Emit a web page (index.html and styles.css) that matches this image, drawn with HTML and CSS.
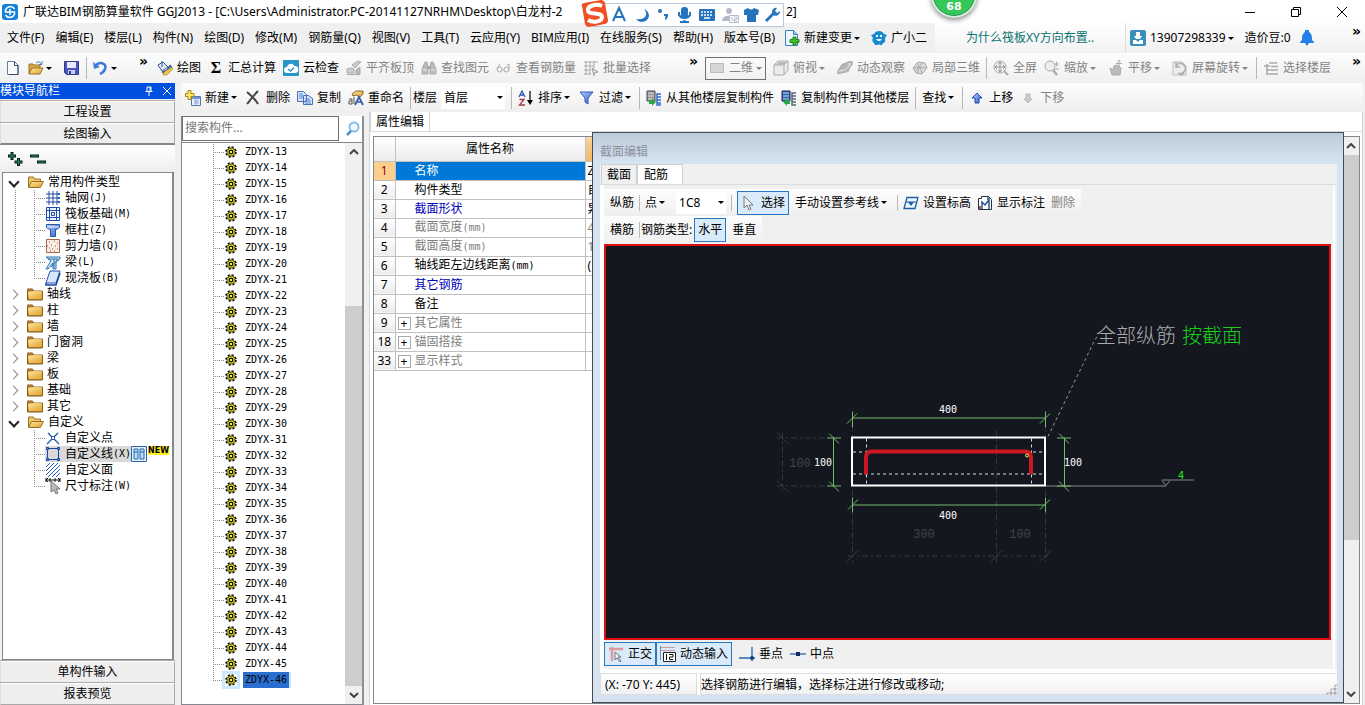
FILE: index.html
```html
<!DOCTYPE html>
<html lang="zh-CN">
<head>
<meta charset="utf-8">
<title>广联达BIM钢筋算量软件 GGJ2013</title>
<link rel="stylesheet" href="styles.css">
</head>
<body>
<svg class="defs" aria-hidden="true">
  <defs>
    <linearGradient id="gold" x1="0" y1="0" x2="1" y2="1"><stop offset="0" stop-color="#ffe9a0"/><stop offset="1" stop-color="#dfa02c"/></linearGradient>
    <linearGradient id="blue" x1="0" y1="0" x2="1" y2="1"><stop offset="0" stop-color="#b9d2ff"/><stop offset="1" stop-color="#2a57c8"/></linearGradient>
    <symbol id="logo" viewBox="0 0 16 16"><rect width="16" height="16" rx="3" fill="#1580d8"/><path d="M12.500 5A5 5 0 0 0 3.500 6v2h9v2a5 5 0 0 1-9 1M8 5v6" fill="none" stroke="#fff" stroke-width="1.5"/></symbol>
    <symbol id="new" viewBox="0 0 16 16"><path d="M2.500 1.500h7l3.500 3.500v9.500H2.500z" fill="#fafcff" stroke="#6c7f9f"/><path d="M9.500 1.500v4H13v9H4" fill="none" stroke="#35486a"/></symbol>
    <symbol id="open" viewBox="0 0 16 16"><path d="M1 14V4h4l1 1h6v3" fill="#d9a53c" stroke="#9a7528"/><path d="M1 14l3-6h11l-3 6z" fill="url(#gold)" stroke="#9a7528"/><path d="M8 3c3-2 4-1 5 1M14 1v3.500h-3" fill="none" stroke="#4b7aa8"/></symbol>
    <symbol id="save" viewBox="0 0 16 16"><path d="M.5 1.500h14v13h-12l-2-2z" fill="#4a55c4" stroke="#303a8c"/><path d="M3 2h9v6H3z" fill="#e8ebff"/><path d="M4 10h7v4H4z" fill="#c9cef0"/><path d="M5 11h2v3H5z" fill="#303a8c"/></symbol>
    <symbol id="undo" viewBox="0 0 16 16"><path d="M3 5c5-4 11-1 9 4-1 3-3 4-5 5" fill="none" stroke="#3e7bd6" stroke-width="2.500"/><path d="M0 2l1 7 6-2z" fill="#3e7bd6"/></symbol>
    <symbol id="paint" viewBox="0 0 16 16"><path d="M1 5l5-3 5 5-6 4z" fill="#dfe9f7" stroke="#345a8c"/><path d="M5 1v6" stroke="#345a8c"/><path d="M13 5c2 1 2 4 0 6l-5 3-3-2 5-2z" fill="#5b84c8" stroke="#27457c"/><path d="M7 12l-1 3h4l6-6-1-2z" fill="#e8c44f" stroke="#8b7122" stroke-width=".5"/></symbol>
    <symbol id="cloud" viewBox="0 0 16 16"><rect width="16" height="16" rx="1" fill="#2795c8"/><path d="M4 13a3 3 0 0 1 0-6 4 4 0 0 1 7.500-1A3.500 3.500 0 0 1 12 13z" fill="#fff"/><path d="M5 9l2.500 2L11 7.500" fill="none" stroke="#2795c8" stroke-width="1.500"/></symbol>
    <symbol id="align" viewBox="0 0 16 16"><path d="M1 9l4-1 3 1v4H1zM6 5l6-4 3 1-6 6z" fill="#ccc" stroke="#aaa"/><path d="M1 14.500h13V7l-4 3v4" fill="#bbb" stroke="#aaa"/></symbol>
    <symbol id="bino" viewBox="0 0 16 16"><path d="M4 2h2l1 5v7H1V9zM10 2h2l3 7v5H9V7z" fill="#bbb" stroke="#aaa"/><path d="M6 6h4v3H6z" fill="#a8a8a8"/><path d="M2 10h4M10 10h4" stroke="#eee"/></symbol>
    <symbol id="glass" viewBox="0 0 16 16"><path d="M1 9.500a2.500 2.500 0 1 0 5 0 2.500 2.500 0 1 0-5 0M8 9.500a2.500 2.500 0 1 0 5 0 2.500 2.500 0 1 0-5 0M1 9l3-5M6 10h2M13 10V4l-2 1" fill="none" stroke="#aaa"/></symbol>
    <symbol id="batch" viewBox="0 0 16 16"><path d="M1 2h14M1 6h10M1 10h7M1 14h7M3 1v14M7 1v14M11 1v7" fill="none" stroke="#aaa"/><path d="M9 8l6 4-3 .5-1 3z" fill="#e5e5e5" stroke="#999"/></symbol>
    <symbol id="rect" viewBox="0 0 16 16"><path d="M1.500 3.500h13v9h-13z" fill="#d5d5d5" stroke="#bbb"/></symbol>
    <symbol id="cube" viewBox="0 0 16 16"><path d="M1 5l4-4h10v9l-4 5H1z" fill="#ececec" stroke="#aaa"/><path d="M1 5h10v10M11 5l4-4" fill="none" stroke="#aaa"/><path d="M2 5l4-3h8l-3 3z" fill="#bbb"/></symbol>
    <symbol id="orbit" viewBox="0 0 16 16"><circle cx="8" cy="8" r="5" fill="#bbb"/><path d="M1 13C0 9 11 0 15 2c1 4-10 13-14 11z" fill="#bbb" fill-opacity=".6" stroke="#aaa" stroke-width="1.500"/><path d="M4 10c3 2 8-2 9-6" fill="none" stroke="#eee"/></symbol>
    <symbol id="local" viewBox="0 0 16 16"><path d="M1 8l5-6 7 1 2 5-5 6-6-1z" fill="#ddd" stroke="#aaa"/><path d="M5 3l2 4 7 1M2 8l5-1-1 6M8 7l2 6M10 3L3 12" fill="none" stroke="#aaa"/></symbol>
    <symbol id="full" viewBox="0 0 16 16"><circle cx="7" cy="7" r="6" fill="#eee" stroke="#aaa"/><path d="M7 2v10M2 7h10M5 4l2-2 2 2M5 10l2 2 2-2M4 5L2 7l2 2M10 5l2 2-2 2" fill="none" stroke="#999"/><path d="M11 11l4 4" stroke="#aaa" stroke-width="2"/></symbol>
    <symbol id="zoom" viewBox="0 0 16 16"><circle cx="6" cy="6" r="5" fill="#eee" stroke="#aaa"/><path d="M9 10l4 5" stroke="#aaa" stroke-width="2.500"/><path d="M10 4h5M12.500 1.500v5M10 9h5" stroke="#aaa"/></symbol>
    <symbol id="pan" viewBox="0 0 16 16"><path d="M2 8l3 2 1-4 3-1 4 3-1 7H4z" fill="#bbb" stroke="#aaa"/><path d="M11 0v7M8 3.500h6M9.500 1.500L11 0l1.500 1.500" fill="none" stroke="#aaa"/></symbol>
    <symbol id="rot" viewBox="0 0 16 16"><path d="M1 2h9l4 4v9H1z" fill="#eee" stroke="#bbb"/><path d="M4 6a5 5 0 1 1 2 7M4 2v5h4M12 13l-4 2" fill="none" stroke="#aaa" stroke-width="1.500"/></symbol>
    <symbol id="floor" viewBox="0 0 16 16"><path d="M1 6h6M3 10h12M3 14h12M6 3h8M8 6.500h7" fill="none" stroke="#aaa" stroke-width="1.700"/><path d="M4 4v10" stroke="#aaa" stroke-width="1.500"/></symbol>
    <symbol id="add" viewBox="0 0 16 16"><path d="M6.500 6.500h9v9h-9z" fill="#e9f2ff" stroke="#5577a8"/><path d="M7 7h8v2H7z" fill="#6b9ae0"/><path d="M9 11h5M9 13h5M11 9v6" stroke="#8ba7cf"/><path d="M3 .5h3v3h3v3H6v3H3v-3H.5v-3H3z" fill="#ffe766" stroke="#aa841d"/></symbol>
    <symbol id="x" viewBox="0 0 16 16"><path d="M1 2c5 4 8 7 11 12M12 1C8 5 5 9 1 14" fill="none" stroke="#444" stroke-width="2"/></symbol>
    <symbol id="copy" viewBox="0 0 16 16"><path d="M.5 1.500h6l3 3v7h-9zM6.500 5.500h5l4 3v6h-9z" fill="#d8e7ff" stroke="#4b6fb0"/><path d="M2 4h4M2 6h4M2 8h4M8 9h5M8 11h6M8 13h6" stroke="#4f84d8"/></symbol>
    <symbol id="rename" viewBox="0 0 16 16"><path d="M4 4l4-3h7v3l-3 3-4-2-3 1z" fill="url(#gold)" stroke="#82662b"/><path d="M7 15l4-8 4 8M9 12h5" fill="none" stroke="#315cad" stroke-width="1.700"/><path d="M1 9h3v5H1v-3h3M6 7v7" fill="none" stroke="#555"/></symbol>
    <symbol id="sort" viewBox="0 0 16 16"><path d="M1 7l3-6 3 6M2 5h4" fill="none" stroke="#2f55b0" stroke-width="1.300"/><path d="M1.500 9.500H6L1.500 15H7" fill="none" stroke="#a93a3a" stroke-width="1.300"/><path d="M12 1v12" stroke="#111" stroke-width="1.300"/><path d="M9 10l3 5 3-5z"/></symbol>
    <symbol id="filter" viewBox="0 0 16 16"><path d="M1 2h13L9 8v6l-3-2V8z" fill="url(#blue)" stroke="#3157ad"/></symbol>
    <symbol id="from" viewBox="0 0 16 16"><path d="M1 1h8v10H1z" fill="#999" stroke="#445"/><path d="M2 3h6M2 6h6M2 9h6" stroke="#ddd"/><path d="M15 4h-4v11h4M11 7h4M11 10h4M11 13h4" fill="none" stroke="#2e6fca" stroke-width="1.500"/><path d="M3 10h3V8l4 4-4 4v-2H3z" fill="#30a342"/></symbol>
    <symbol id="to" viewBox="0 0 16 16"><path d="M1 1h8v10H1z" fill="#2e65b8" stroke="#224"/><path d="M2 3h6M2 6h6M2 9h6" stroke="#cde"/><path d="M15 3h-4v12h4M11 6h4M11 9h4M11 12h4" fill="none" stroke="#567" stroke-width="1.500"/><path d="M9 10H6V8l-4 4 4 4v-2h3z" fill="#28a34a"/></symbol>
    <symbol id="up" viewBox="0 0 12 16"><path d="M6 3l5 5H8v5H4V8H1z" fill="url(#blue)" stroke="#2149b0"/></symbol>
    <symbol id="down" viewBox="0 0 12 16"><path d="M6 13L2 9h2V4h4v5h2z" fill="#ccc" stroke="#bbb"/></symbol>
    <symbol id="change" viewBox="0 0 16 16"><path d="M1.500.5h8l4 4v11h-12z" fill="#eef7ff" stroke="#3d7fb8"/><path d="M9.500.5v4h4" fill="#9cc9ec" stroke="#3d7fb8"/><path d="M9 7h3v2.500h3v3h-3V15H9v-2.500H6v-3h3z" fill="#3fbd2a" stroke="#24851a"/></symbol>
    <symbol id="robot" viewBox="0 0 16 16"><path d="M3 4c2-4 8-4 10 0l3 1-2 3c1 4-1 5-2 5l-1 2H9l-1-1-1 1H4l-1-2C1 12 1 9 2 8L0 5z" fill="#1788d2"/><path d="M5 6h2M9 6h2" stroke="#fff" stroke-width="2"/><path d="M5 9c2 3 4 3 6 0z" fill="#e6f8ff"/></symbol>
    <symbol id="user" viewBox="0 0 16 16"><rect width="16" height="16" rx="2" fill="#3b8fbd"/><path d="M6 2h4v4h2l-2 3H6L4 6h2zM3 10h10v4H3z" fill="#fff"/><path d="M6 10l2 2 2-2" fill="#3b8fbd"/></symbol>
    <symbol id="bell" viewBox="0 0 16 16"><path d="M6 2V0h4v2c3 2 3 5 3 8l2 2v1H1v-1l2-2c0-3 0-6 3-8zM6 13h4l-2 3z" fill="#257fe8"/></symbol>
    <symbol id="folder" viewBox="0 0 16 16"><path d="M.5 3h5l1 2h9v9H.5z" fill="#bc8427" stroke="#80611f"/><path d="M1 6l6-1h8v8H2z" fill="url(#gold)"/></symbol>
    <symbol id="fopen" viewBox="0 0 16 16"><path d="M.5 13V3h5l1 2h6v3" fill="#efc767" stroke="#96732b"/><path d="M.5 13.500l3-6h12l-3 6z" fill="url(#gold)" stroke="#96732b"/></symbol>
    <symbol id="grid" viewBox="0 0 16 16"><path d="M1 4h14M1 8h14M1 12h14M4 1v14M8 1v14M12 1v14" stroke="#244b9c"/><path d="M13 3h2v2h-2zM13 7h2v2h-2zM13 11h2v2h-2z" fill="#245fc9"/></symbol>
    <symbol id="raft" viewBox="0 0 16 16"><path d="M1.500 1.500h13v13h-13zM4.500 4.500h7v7h-7zM1 4.500h14M1 11.500h14M4.500 1v14M11.500 1v14M6.500 6.500h3v3h-3z" fill="#dfeaff" fill-opacity=".4" stroke="#1d4ea8"/></symbol>
    <symbol id="col" viewBox="0 0 16 16"><path d="M1.500 2.500h13v3l-3 2h-1v7h-5v-7h-1l-3-2z" fill="url(#blue)" stroke="#2454a8"/><path d="M2 5h12" stroke="#eef"/></symbol>
    <symbol id="wall" viewBox="0 0 16 16"><path d="M1.500 1.500h13v13h-13z" fill="#fbefe5" stroke="#a86643"/><path d="M4 4h1M9 3h1M12 5h1M6 7h1M10 8h1M4 10h1M7 11h1M12 11h1M9 13h1M5 13h1M2 8h1" stroke="#865032"/></symbol>
    <symbol id="beam" viewBox="0 0 16 16"><path d="M1 3h14v2l-4 3v7H8V9l-5 6H1l5-8z" fill="#d6e9fb" stroke="#286fae"/><path d="M3 5h10L6 13M9 14V5" stroke="#286fae" fill="none"/></symbol>
    <symbol id="slab" viewBox="0 0 16 16"><path d="M5 1h10l-4 12H1z" fill="#d6e7fd" stroke="#2457a8"/><path d="M1 13v2h10l4-12" fill="none" stroke="#1747a0" stroke-width="1.500"/></symbol>
    <symbol id="point" viewBox="0 0 16 16"><path d="M3 3l4 4M9 9l5 5M13 3L9 7M7 9l-5 5" stroke="#2457a8" stroke-width="1.300"/><path d="M6.500 6.500h3v3h-3z" fill="#fff" stroke="#2457a8"/></symbol>
    <symbol id="line" viewBox="0 0 16 16"><path d="M2.500 2.500h11v11h-11z" fill="none" stroke="#1747a0"/><path d="M1.500 1.500h2v2h-2zM12.500 1.500h2v2h-2zM1.500 12.500h2v2h-2zM12.500 12.500h2v2h-2z" fill="#5d95e8" stroke="#1747a0"/></symbol>
    <symbol id="face" viewBox="0 0 16 16"><path d="M1 5l4-4M1 9l8-8M1 13L13 1M3 15L15 3M7 15l8-8M11 15l4-4" stroke="#2457b8"/></symbol>
    <symbol id="dim" viewBox="0 0 16 16"><path d="M1 0v4M15 0v4M1 2h14M3 0L1 2l2 2M13 0l2 2-2 2M5 0v4M10 0v4" fill="none" stroke="#111"/><path d="M6 3v11l3-2 2 4 2-1-2-4h4z" fill="#bbb" stroke="#777"/></symbol>
    <symbol id="book" viewBox="0 0 16 16"><path d="M.5.5h15v15H.500z" fill="#e2f1ff" stroke="#2c66a5"/><path d="M3 3h4v10H3zM9 3h4v10H9zM3 6h4M9 6h4" fill="#b8dcff" stroke="#2c66a5"/></symbol>
    <symbol id="gear" viewBox="0 0 12 12"><circle cx="6" cy="6" r="4.600" fill="none" stroke="#171700" stroke-width="2.400" stroke-dasharray="2 1.610"/><circle cx="6" cy="6" r="4.100" fill="#dede28" stroke="#333300" stroke-width=".7"/><path d="M6 2v8M2 6h8M3 3l6 6M9 3l-6 6" stroke="#333300" stroke-width=".6"/><rect x="4.500" y="4.500" width="3" height="3" fill="#f4f440" stroke="#111"/></symbol>
    <symbol id="mag" viewBox="0 0 16 16"><circle cx="9" cy="6" r="4.500" fill="#eef8ff" stroke="#8abce4" stroke-width="2"/><path d="M6 10l-4 4" stroke="#4f8fc8" stroke-width="2.500"/></symbol>
    <symbol id="plus2" viewBox="0 0 16 16"><path d="M5 1v8M1 5h8M11.500 7v8M7.500 11h8" stroke="#041c14" stroke-width="3"/><path d="M5 2v6M2 5h6M11.500 8v6M8.500 11h6" stroke="#2b8f72"/></symbol>
    <symbol id="minus2" viewBox="0 0 16 16"><path d="M0 5h9M7 11h9" stroke="#041c14" stroke-width="3"/><path d="M1 5h7M8 11h7" stroke="#2b8f72"/></symbol>
    <symbol id="cursor" viewBox="0 0 16 16"><path d="M3 1v12l3-3 2 5 2-1-2-4h4z" fill="#f2f4f6" stroke="#777"/></symbol>
    <symbol id="elev" viewBox="0 0 16 16"><path d="M4 2.500h11l-3 11H1z" fill="#eef6ff" stroke="#1c5fa8" stroke-width="1.300"/><path d="M3 7h10" stroke="#1c5fa8"/><path d="M5 7h6l-3 4z" fill="#1c5fa8"/></symbol>
    <symbol id="show" viewBox="0 0 16 16"><path d="M1.500 14.500v-11h3v-2h7l3 3v10z" fill="#fff" stroke="#234"/><path d="M5 14V7l3 3 4-5v9M11 2v3" fill="none" stroke="#28558c" stroke-width="1.500"/><path d="M2 11h2v3H2z" fill="#b55"/></symbol>
    <symbol id="ortho" viewBox="0 0 16 16"><path d="M1 3h14M4 1v14" stroke="#e09a9a" stroke-width="2.500"/><path d="M7 6v8l2-2 3 4 1-1-3-4h3z" fill="#e5eaf0" stroke="#778"/></symbol>
    <symbol id="dyn" viewBox="0 0 16 16"><path d="M.5 0v14" stroke="#88a"/><path d="M1 1.500h14M1 4.500h14" stroke="#c99"/><path d="M3.500 6.500h12v9h-12z" fill="#fff" stroke="#222"/><path d="M6.500 8v6M9 8.500h4v2.500H9.500v2.500H13" fill="none" stroke="#111"/></symbol>
    <symbol id="perp" viewBox="0 0 16 16"><path d="M0 12h16M13 1v14" stroke="#2867b0" stroke-width="1.300"/><circle cx="13" cy="12" r="2" fill="#153e7c"/></symbol>
    <symbol id="mid" viewBox="0 0 16 16"><path d="M0 8h16" stroke="#2867b0" stroke-width="1.300"/><path d="M6 6h4v4H6z" fill="#122a68"/></symbol>
  </defs>
</svg>

<header class="titlebar">
  <svg class="i"><use href="#logo"/></svg>
  <h1>广联达BIM钢筋算量软件 GGJ2013 - [C:\Users\Administrator.PC-20141127NRHM\Desktop\白龙村-2</h1>
  <div class="ime">
    <svg viewBox="0 0 206 30">
      <path d="M12.500 3.500h191v23h-191z" fill="#fff" stroke="#b9c8d8"/>
      <path d="M2 6Q1 4 4 3L21 0q3 0 4 3l3 17q0 3-3 4L9 27q-3 0-4-3z" fill="#ee5125"/>
      <path d="M22 6C16 3 7 6 8 11c1 4 14 1 14 6 0 5-9 6-14 3" fill="none" stroke="#fff" stroke-width="4"/>
      <g fill="none" stroke="#2572bd" stroke-width="2"><path d="M33 21l6-13 6 13M35 17h8"/><path d="M99 12v3a6 5 0 0 0 11 0v-3M104.500 20v2M100 22h9"/></g>
      <path d="M64 9c5 5 1 12-8 10 4 5 12 3 13-3 0-3-2-6-5-7zM78 11a2 2 0 1 0 4 0 2 2 0 0 0-4 0M84 14h4c0 4-1 5-3 6v-2c1-1 1-2-1-2z" fill="#2572bd"/>
      <rect x="101" y="7" width="7" height="11" rx="3" fill="#2572bd"/>
      <rect x="119" y="9" width="16" height="12" rx="1" fill="#2572bd"/><path d="M121 12h12M121 15h12" stroke="#fff" stroke-width="1.500" stroke-dasharray="2 1"/><path d="M124 18h6" stroke="#fff" stroke-width="1.500"/>
      <circle cx="149" cy="11" r="3" fill="#b5b9cc"/><path d="M142 21c0-7 13-7 13 0z" fill="#b5b9cc"/><path d="M149.500 15.500h9v7h-9zM152 17v4M154 17h3v2h-3v2h3" fill="#fff" stroke="#b5b9cc"/>
      <path d="M164 10l4-2q3 3 6 0l5 2-1 5h-2v7h-9v-7h-3z" fill="#2572bd"/>
      <path d="M186 21l8-8" stroke="#2572bd" stroke-width="3"/><path d="M192 12c0-3 3-5 5-4l-2 3 2 2 3-2c0 4-4 6-7 4z" fill="#2572bd"/>
    </svg>
  </div>
  <span class="titleend">2]</span>
  <div class="wincontrols">
    <button aria-label="最小化"><svg viewBox="0 0 12 12"><path d="M1 6.500h10" stroke="#000"/></svg></button>
    <button aria-label="还原"><svg viewBox="0 0 12 12"><path d="M1.500 3.500h7v7h-7zM3.500 3.500v-2h7v7h-2" fill="none" stroke="#000"/></svg></button>
    <button aria-label="关闭"><svg viewBox="0 0 12 12"><path d="M1 1l10 10M11 1L1 11" stroke="#000"/></svg></button>
  </div>
</header>
<div class="score">68</div>

<nav class="menubar">
  <div class="menus">
    <button>文件(F)</button><button>编辑(E)</button><button>楼层(L)</button><button>构件(N)</button><button>绘图(D)</button><button>修改(M)</button><button>钢筋量(Q)</button><button>视图(V)</button><button>工具(T)</button><button>云应用(Y)</button><button>BIM应用(I)</button><button>在线服务(S)</button><button>帮助(H)</button><button>版本号(B)</button>
  </div>
  <div class="menuextra">
    <button class="tb"><svg class="i"><use href="#change"/></svg>新建变更<i class="caret wide"></i></button>
    <button class="tb"><svg class="i"><use href="#robot"/></svg>广小二</button>
  </div>
  <div class="tip"><a href="#">为什么筏板XY方向布置..</a></div>
  <div class="account">
    <button class="tb"><svg class="i"><use href="#user"/></svg>13907298339<i class="caret wide"></i></button>
    <button class="tb bean">造价豆:0<svg class="i"><use href="#bell"/></svg></button>
    <button class="more" aria-label="更多">»</button>
  </div>
</nav>

<div class="toolbar">
  <div class="bar files">
    <button class="tb" aria-label="新建"><svg class="i"><use href="#new"/></svg></button>
    <button class="tb" aria-label="打开"><svg class="i"><use href="#open"/></svg><i class="caret wide"></i></button>
    <button class="tb" aria-label="保存"><svg class="i"><use href="#save"/></svg></button>
    <i class="sep"></i>
    <button class="tb" aria-label="撤销"><svg class="i"><use href="#undo"/></svg><i class="caret wide"></i></button>
    <button class="more" aria-label="更多">»</button>
  </div>
  <div class="bar draw">
    <button class="tb"><svg class="i"><use href="#paint"/></svg>绘图</button>
    <button class="tb"><b class="sigma">Σ</b>汇总计算</button>
    <button class="tb"><svg class="i"><use href="#cloud"/></svg>云检查</button>
    <button class="tb off"><svg class="i"><use href="#align"/></svg>平齐板顶</button>
    <button class="tb off"><svg class="i"><use href="#bino"/></svg>查找图元</button>
    <button class="tb off"><svg class="i"><use href="#glass"/></svg>查看钢筋量</button>
    <button class="tb off"><svg class="i"><use href="#batch"/></svg>批量选择</button>
    <button class="more" aria-label="更多">»</button>
  </div>
  <div class="bar view">
    <label class="combo framed off"><svg class="i"><use href="#rect"/></svg><select aria-label="视图模式"><option>二维</option></select><i class="caret"></i></label>
    <button class="tb off"><svg class="i"><use href="#cube"/></svg>俯视<i class="caret wide"></i></button>
    <button class="tb off"><svg class="i"><use href="#orbit"/></svg>动态观察</button>
    <button class="tb off"><svg class="i"><use href="#local"/></svg>局部三维</button>
    <i class="sep"></i>
    <button class="tb off"><svg class="i"><use href="#full"/></svg>全屏</button>
    <button class="tb off"><svg class="i"><use href="#zoom"/></svg>缩放<i class="caret wide"></i></button>
    <button class="tb off"><svg class="i"><use href="#pan"/></svg>平移<i class="caret wide"></i></button>
    <button class="tb off"><svg class="i"><use href="#rot"/></svg>屏幕旋转<i class="caret"></i></button>
    <i class="sep"></i>
    <button class="tb off"><svg class="i"><use href="#floor"/></svg>选择楼层</button>
    <button class="more" aria-label="更多">»</button>
  </div>
</div>

<main class="main">
  <aside class="nav">
    <div class="navtitle"><h2>模块导航栏</h2>
      <button aria-label="固定"><svg viewBox="0 0 10 10"><path d="M3 5V1h4v4M1.500 5.500h7M5 6v4M6 1v4" fill="none" stroke="#fff"/></svg></button>
      <button aria-label="关闭"><svg viewBox="0 0 10 10"><path d="M1 1l8 8M9 1L1 9" stroke="#fff"/></svg></button>
    </div>
    <button class="navbtn">工程设置</button>
    <button class="navbtn on">绘图输入</button>
    <div class="navtools"><button aria-label="全部展开"><svg class="i"><use href="#plus2"/></svg></button><button aria-label="全部折叠"><svg class="i"><use href="#minus2"/></svg></button></div>
    <ul class="tree">
      <li class="branch open"><svg class="i"><use href="#fopen"/></svg>常用构件类型</li>
      <li class="leaf run"><svg class="i"><use href="#grid"/></svg>轴网<span class="mono">(J)</span></li>
      <li class="leaf run"><svg class="i"><use href="#raft"/></svg>筏板基础<span class="mono">(M)</span></li>
      <li class="leaf run"><svg class="i"><use href="#col"/></svg>框柱<span class="mono">(Z)</span></li>
      <li class="leaf run"><svg class="i"><use href="#wall"/></svg>剪力墙<span class="mono">(Q)</span></li>
      <li class="leaf run"><svg class="i"><use href="#beam"/></svg>梁<span class="mono">(L)</span></li>
      <li class="leaf run end"><svg class="i"><use href="#slab"/></svg>现浇板<span class="mono">(B)</span></li>
      <li class="branch"><svg class="i"><use href="#folder"/></svg>轴线</li>
      <li class="branch"><svg class="i"><use href="#folder"/></svg>柱</li>
      <li class="branch"><svg class="i"><use href="#folder"/></svg>墙</li>
      <li class="branch"><svg class="i"><use href="#folder"/></svg>门窗洞</li>
      <li class="branch"><svg class="i"><use href="#folder"/></svg>梁</li>
      <li class="branch"><svg class="i"><use href="#folder"/></svg>板</li>
      <li class="branch"><svg class="i"><use href="#folder"/></svg>基础</li>
      <li class="branch"><svg class="i"><use href="#folder"/></svg>其它</li>
      <li class="branch open"><svg class="i"><use href="#fopen"/></svg>自定义</li>
      <li class="leaf"><svg class="i"><use href="#point"/></svg>自定义点</li>
      <li class="leaf"><span class="picked"><svg class="i"><use href="#line"/></svg>自定义线<span class="mono">(X)</span></span><svg class="i"><use href="#book"/></svg><b class="newtag">NEW</b></li>
      <li class="leaf"><svg class="i"><use href="#face"/></svg>自定义面</li>
      <li class="leaf end"><svg class="i"><use href="#dim"/></svg>尺寸标注<span class="mono">(W)</span></li>
    </ul>
    <button class="navbtn">单构件输入</button>
    <button class="navbtn">报表预览</button>
  </aside>

  <section class="work">
    <div class="bar comp">
      <button class="tb"><svg class="i"><use href="#add"/></svg>新建<i class="caret"></i></button>
      <button class="tb"><svg class="i"><use href="#x"/></svg>删除</button>
      <button class="tb"><svg class="i"><use href="#copy"/></svg>复制</button>
      <button class="tb"><svg class="i"><use href="#rename"/></svg>重命名</button>
      <i class="sep"></i>
      <label class="combo floor">楼层<span class="box"><select><option>首层</option></select><i class="caret"></i></span></label>
      <i class="sep"></i>
      <button class="tb"><svg class="i"><use href="#sort"/></svg>排序<i class="caret"></i></button>
      <button class="tb"><svg class="i"><use href="#filter"/></svg>过滤<i class="caret"></i></button>
      <i class="sep"></i>
      <button class="tb"><svg class="i"><use href="#from"/></svg>从其他楼层复制构件</button>
      <button class="tb"><svg class="i"><use href="#to"/></svg>复制构件到其他楼层</button>
      <i class="sep"></i>
      <button class="tb">查找<i class="caret"></i></button>
      <i class="sep"></i>
      <button class="tb"><svg class="i"><use href="#up"/></svg>上移</button>
      <button class="tb off"><svg class="i"><use href="#down"/></svg>下移</button>
    </div>
    <div class="panes">
      <div class="components">
        <div class="search"><input type="text" placeholder="搜索构件..." aria-label="搜索构件"><button aria-label="搜索"><svg class="i"><use href="#mag"/></svg></button></div>
        <div class="listbox">
          <ul class="list">
            <li><svg class="g"><use href="#gear"/></svg><span>ZDYX-13</span></li>
            <li><svg class="g"><use href="#gear"/></svg><span>ZDYX-14</span></li>
            <li><svg class="g"><use href="#gear"/></svg><span>ZDYX-15</span></li>
            <li><svg class="g"><use href="#gear"/></svg><span>ZDYX-16</span></li>
            <li><svg class="g"><use href="#gear"/></svg><span>ZDYX-17</span></li>
            <li><svg class="g"><use href="#gear"/></svg><span>ZDYX-18</span></li>
            <li><svg class="g"><use href="#gear"/></svg><span>ZDYX-19</span></li>
            <li><svg class="g"><use href="#gear"/></svg><span>ZDYX-20</span></li>
            <li><svg class="g"><use href="#gear"/></svg><span>ZDYX-21</span></li>
            <li><svg class="g"><use href="#gear"/></svg><span>ZDYX-22</span></li>
            <li><svg class="g"><use href="#gear"/></svg><span>ZDYX-23</span></li>
            <li><svg class="g"><use href="#gear"/></svg><span>ZDYX-24</span></li>
            <li><svg class="g"><use href="#gear"/></svg><span>ZDYX-25</span></li>
            <li><svg class="g"><use href="#gear"/></svg><span>ZDYX-26</span></li>
            <li><svg class="g"><use href="#gear"/></svg><span>ZDYX-27</span></li>
            <li><svg class="g"><use href="#gear"/></svg><span>ZDYX-28</span></li>
            <li><svg class="g"><use href="#gear"/></svg><span>ZDYX-29</span></li>
            <li><svg class="g"><use href="#gear"/></svg><span>ZDYX-30</span></li>
            <li><svg class="g"><use href="#gear"/></svg><span>ZDYX-31</span></li>
            <li><svg class="g"><use href="#gear"/></svg><span>ZDYX-32</span></li>
            <li><svg class="g"><use href="#gear"/></svg><span>ZDYX-33</span></li>
            <li><svg class="g"><use href="#gear"/></svg><span>ZDYX-34</span></li>
            <li><svg class="g"><use href="#gear"/></svg><span>ZDYX-35</span></li>
            <li><svg class="g"><use href="#gear"/></svg><span>ZDYX-36</span></li>
            <li><svg class="g"><use href="#gear"/></svg><span>ZDYX-37</span></li>
            <li><svg class="g"><use href="#gear"/></svg><span>ZDYX-38</span></li>
            <li><svg class="g"><use href="#gear"/></svg><span>ZDYX-39</span></li>
            <li><svg class="g"><use href="#gear"/></svg><span>ZDYX-40</span></li>
            <li><svg class="g"><use href="#gear"/></svg><span>ZDYX-41</span></li>
            <li><svg class="g"><use href="#gear"/></svg><span>ZDYX-42</span></li>
            <li><svg class="g"><use href="#gear"/></svg><span>ZDYX-43</span></li>
            <li><svg class="g"><use href="#gear"/></svg><span>ZDYX-44</span></li>
            <li><svg class="g"><use href="#gear"/></svg><span>ZDYX-45</span></li>
            <li class="sel"><svg class="g"><use href="#gear"/></svg><span>ZDYX-46</span></li>
          </ul>
          <div class="scroll low"><button aria-label="向上"><svg viewBox="0 0 10 6"><path d="M1 5l4-4 4 4"/></svg></button><i class="track before"></i><i class="thumb"></i><i class="track"></i><button aria-label="向下"><svg viewBox="0 0 10 6"><path d="M1 1l4 4 4-4"/></svg></button></div>
        </div>
      </div>

      <div class="props">
        <div class="tabs"><button class="tab on">属性编辑</button></div>
        <div class="sheetbox">
          <table class="sheet">
            <thead><tr><th class="no"></th><th class="name">属性名称</th><th class="val hot"></th></tr></thead>
            <tbody>
              <tr class="cur"><th>1</th><td>名称</td><td>Z</td></tr>
              <tr><th>2</th><td>构件类型</td><td>自</td></tr>
              <tr class="link"><th>3</th><td>截面形状</td><td>异</td></tr>
              <tr class="dim"><th>4</th><td>截面宽度<span class="mono">(mm)</span></td><td>4</td></tr>
              <tr class="dim"><th>5</th><td>截面高度<span class="mono">(mm)</span></td><td>1</td></tr>
              <tr><th>6</th><td>轴线距左边线距离<span class="mono">(mm)</span></td><td>(</td></tr>
              <tr class="link"><th>7</th><td>其它钢筋</td><td></td></tr>
              <tr><th>8</th><td>备注</td><td></td></tr>
              <tr class="dim grp"><th>9</th><td><button aria-label="展开">+</button>其它属性</td><td></td></tr>
              <tr class="dim grp"><th>18</th><td><button aria-label="展开">+</button>锚固搭接</td><td></td></tr>
              <tr class="dim grp"><th>33</th><td><button aria-label="展开">+</button>显示样式</td><td></td></tr>
            </tbody>
          </table>
          <div class="scroll high"><button aria-label="向上"><svg viewBox="0 0 10 6"><path d="M1 5l4-4 4 4"/></svg></button><i class="thumb"></i><i class="track"></i><button aria-label="向下"><svg viewBox="0 0 10 6"><path d="M1 1l4 4 4-4"/></svg></button></div>
        </div>

        <section class="dialog" role="dialog" aria-label="截面编辑">
          <h2>截面编辑</h2>
          <div class="dlgbody">
            <div class="dlgtabs"><button class="tab">截面</button><button class="tab on">配筋</button></div>
            <div class="pane">
              <div class="bar strip">
                <button class="tb">纵筋</button><i class="sep"></i>
                <button class="tb">点<i class="caret wide"></i></button>
                <span class="combo box"><select aria-label="钢筋规格"><option>1C8</option></select><i class="caret"></i></span><i class="sep"></i>
                <button class="tb pressed"><svg class="i"><use href="#cursor"/></svg>选择</button>
                <button class="tb">手动设置参考线<i class="caret wide"></i></button><i class="sep"></i>
                <button class="tb"><svg class="i"><use href="#elev"/></svg>设置标高</button>
                <button class="tb"><svg class="i"><use href="#show"/></svg>显示标注</button>
                <button class="tb off">删除</button>
              </div>
              <div class="bar strip second">
                <button class="tb">横筋</button><i class="sep"></i>
                <span class="kind">钢筋类型:</span>
                <button class="tb pressed">水平</button>
                <button class="tb">垂直</button>
              </div>
              <svg class="cad" viewBox="606 246 723 391" role="img" aria-label="截面配筋图">
                <g fill="none" stroke="#34383e" stroke-dasharray="6 3 2 3">
                  <path d="M777 437.500h55M777 485.500h55M782.500 432v58M852.500 490v72M996.500 430v132M1045.500 490v72M848 555.500h200M852.500 420v16M1045.500 420v16"/>
                </g>
                <path d="M777 432l11 11M777 480l11 11M847 561l11-11M991 561l11-11M1040 561l11-11" stroke="#3a3e44"/>
                <path d="M1048 436L1094 341l3-5" fill="none" stroke="#999" stroke-dasharray="3 3"/>
                <path d="M1046 485.500h120M1162 479.500h32M1162 480l4 5 4-5" fill="none" stroke="#888"/>
                <g fill="none" stroke="#73b96a">
                  <path d="M852.500 411v16M1045.500 411v16M852.500 417.500h193M847 423l10-10M1040 423l10-10M852.500 497v15M1045.500 497v15M852.500 504.500h193M848 509l10-10M1040 509l10-10"/>
                  <path d="M833.500 437v49M827 437.500h14M827 485.500h14M829 433l10 10M829 481l10 10M1064.500 437v49M1057 437.500h14M1057 485.500h14M1059 433l10 10M1059 481l10 10"/>
                </g>
                <path d="M852 437h193v48H852z" fill="none" stroke="#fff" stroke-width="2"/>
                <path d="M853 451.500h191M853 473.500h191M866.500 438v47M1031.500 438v47" fill="none" stroke="#c6e2ea" stroke-dasharray="3 3"/>
                <path d="M866 474v-17q0-6 6-6h153q6 0 6 6v17" fill="none" stroke="#cc1820" stroke-width="4"/>
                <circle cx="1027" cy="455" r="1.500" fill="#333" stroke="#f2e25a"/>
                <g class="nums"><text x="948" y="412">400</text><text x="948" y="518">400</text><text x="823" y="465">100</text><text x="1073" y="465">100</text><text class="lvl" x="1181" y="478">4</text></g>
                <g class="ghost"><text x="800" y="466">100</text><text x="924" y="537">300</text><text x="1020" y="537">100</text></g>
                <g class="note"><text x="1096" y="342">全部纵筋</text><text class="green" x="1182" y="342">按截面</text></g>
              </svg>
              <div class="bar snaps">
                <button class="tb pressed"><svg class="i"><use href="#ortho"/></svg>正交</button><button class="tb pressed"><svg class="i"><use href="#dyn"/></svg>动态输入</button>
                <button class="tb free"><svg class="i"><use href="#perp"/></svg>垂点</button>
                <button class="tb free"><svg class="i"><use href="#mid"/></svg>中点</button>
              </div>
            </div>
            <footer class="status"><span class="xy">(X: -70 Y: 445)</span><span class="hint">选择钢筋进行编辑，选择标注进行修改或移动;</span><i class="grip"></i></footer>
          </div>
        </section>
      </div>
    </div>
  </section>
</main>
</body>
</html>
```

FILE: styles.css
```css
* { box-sizing: border-box; }
body {
  margin: 0;
  height: 100vh;
  display: flex;
  flex-direction: column;
  overflow: hidden;
  background: #f0f0f0;
  color: #000;
  font: 12px/16px "Noto Sans", "Noto Sans CJK SC", sans-serif;
}
button, input, select { font: inherit; color: inherit; }
button { border: 0; padding: 0; background: none; white-space: nowrap; }
h1, h2, ul { margin: 0; padding: 0; font: inherit; list-style: none; }
i { font-style: normal; }
.defs { position: absolute; width: 0; height: 0; }
.i { width: 16px; height: 16px; flex: none; }
.mono { font: 10px/16px "DejaVu Sans Mono", monospace; }

/* Title bar */
.titlebar { flex: none; height: 23px; display: flex; align-items: center; padding-left: 2px; background: #fff; }
.titlebar h1 { width: 557px; padding-left: 5px; margin-left: 0; white-space: nowrap; }
.wincontrols { display: flex; margin-left: auto; }
.wincontrols button { width: 46px; height: 23px; display: grid; place-items: center; }
.wincontrols svg { width: 12px; height: 12px; }
.ime { width: 206px; height: 30px; flex: none; align-self: flex-start; margin: 0 0 -7px 5px; position: relative; z-index: 3; }
.ime svg { display: block; width: 100%; }
.score {
  position: absolute; left: 931px; top: -28px; width: 46px; height: 46px; z-index: 3;
  border: 2px solid #d5ead9; border-radius: 50%;
  background: #35c759; box-shadow: inset 0 0 0 1px #1e8f48, 0 2px 5px #888;
  color: #fff; font: bold 11px/16px "DejaVu Sans", sans-serif; text-align: center; padding-top: 25px;
}

/* Shared toolbar parts */
.tb { display: flex; align-items: center; gap: 4px; flex: none; }
.off { color: #838383; }
.caret { width: 10px; height: 16px; flex: none; display: grid; place-items: center; margin-left: -4px; }
.caret::before { content: ""; border: 3px solid transparent; border-top-color: currentColor; border-bottom: 0; }
.caret.wide { width: 16px; margin-left: -7px; }
.sep { width: 1px; height: 22px; margin: 0 -1px; background: #b8b8b8; flex: none; }
.more { margin-left: auto; align-self: flex-start; font: bold 14px/16px "DejaVu Sans", sans-serif; }
.bar { display: flex; align-items: center; gap: 7px; background: linear-gradient(#fdfdfd, #efefef); min-width: 0; }
.combo { display: flex; align-items: center; gap: 4px; flex: none; }
.combo select { flex: 1; min-width: 0; appearance: none; border: 0; background: none; padding: 0; line-height: 16px; opacity: 1; }

/* Menu bar */
.menubar { flex: none; height: 30px; display: flex; align-items: stretch; }
.menus { display: flex; gap: 11px; padding: 0 9px 0 7px; flex: none; }
.menuextra { display: flex; gap: 6px; padding-right: 8px; flex: none; }
.tip { flex: 1; display: flex; align-items: center; justify-content: center; background: linear-gradient(#fff, #f2f2f2); }
.tip a { color: #08716f; text-decoration: none; }
.account { display: flex; align-items: center; gap: 6px; padding: 0 4px; width: 240px; border-left: 1px solid #ddd; background: linear-gradient(#fdfdfd, #f0f0f0); }
.bean { gap: 8px; }

/* Main toolbar */
.toolbar { flex: none; height: 30px; display: flex; }
.files { width: 153px; padding: 0 5px; }
.draw { width: 549px; padding: 0 4px; }
.view { flex: 1; padding: 0 4px 0 3px; }
.sigma { width: 16px; text-align: center; font: bold 16px/16px "Liberation Serif", serif; }
.framed { width: 61px; height: 23px; border: 1px solid #707070; padding: 0 1px 0 3px; }

/* Left navigation */
.main { flex: 1; display: flex; gap: 6px; min-height: 0; }
.nav { width: 175px; flex: none; display: flex; flex-direction: column; }
.navtitle { height: 16px; margin-bottom: 2px; display: flex; align-items: center; gap: 8px; background: #0050e0; color: #fff; padding-right: 3px; }
.navtitle h2 { flex: 1; }
.navtitle button, .navtitle svg { width: 10px; height: 10px; display: block; }
.navbtn { height: 22px; flex: none; border: 1px solid #a8a8a8; border-top-color: #fff; border-left-color: #ddd; background: #eee; box-shadow: 0 -1px #aaa; }
.navbtn.on { border-bottom: 2px solid #888; }
.navtools { height: 27px; display: flex; align-items: center; gap: 7px; padding: 0 7px; background: linear-gradient(#fff, #eee); }
.navtools svg { display: block; }
.tree { flex: 1; min-height: 0; overflow: hidden; margin: 0 1px 1px 2px; padding: 1px 0; background: #fff; border: 1px solid #828790; border-right-width: 2px; }
.tree li { height: 16px; display: flex; align-items: center; white-space: nowrap; }
.branch { gap: 4px; }
.branch::before { content: ""; width: 6px; height: 6px; margin: 0 6px 0 7px; border: 1px solid #888; border-width: 1px 1px 0 0; transform: rotate(45deg); flex: none; }
.branch.open::before { border-color: #222; border-width: 2px 2px 0 0; transform: rotate(135deg); }
.leaf {
  padding-left: 42px;
  --v: repeating-linear-gradient(to bottom, #888 0 1px, transparent 1px 2px);
  --h: repeating-linear-gradient(to right, #888 0 1px, transparent 1px 2px);
  background: var(--v) 31px 0 / 1px 100% no-repeat, var(--h) 31px 8px / 11px 1px no-repeat;
}
.leaf.run { background: var(--v) 31px 0 / 1px 100% no-repeat, var(--h) 31px 8px / 11px 1px no-repeat, var(--v) 12px 0 / 1px 100% no-repeat; }
.leaf.end { background: var(--v) 31px 0 / 1px 8px no-repeat, var(--h) 31px 8px / 11px 1px no-repeat; }
.leaf > .i, .picked .i { margin-right: 4px; }
.picked { display: flex; align-items: center; background: #d9d9d9; }
.picked + .i { margin-right: 1px; }
.newtag { align-self: flex-start; background: #ffee20; font: bold 8px/9px "DejaVu Sans", sans-serif; }

/* Work area */
.work { flex: 1; min-width: 0; display: flex; flex-direction: column; }
.comp { height: 29px; flex: none; padding: 0 4px; margin-right: 2px; }
.floor { margin-left: -4px; }
.floor .box { width: 64px; height: 22px; }
.box { display: flex; align-items: center; background: #fff; padding-left: 3px; }
.panes { flex: 1; min-height: 0; display: flex; gap: 5px; }

.components { width: 183px; flex: none; display: flex; flex-direction: column; border-right: 2px solid #8b8f96; border-left: 1px solid #828790; background: #fff; margin-top: 4px; }
.search { height: 26px; flex: none; display: flex; padding-bottom: 1px; gap: 4px; }
.search input { flex: 1; min-width: 0; border: 1px solid #707070; padding: 0 2px 2px; background: #fff; }
.search input::placeholder { color: #777; }
.search button { width: 19px; display: grid; place-items: center; }
.listbox { flex: 1; min-height: 0; display: flex; border-top: 1px solid #828790; border-bottom: 1px solid #828790; }
.list { flex: 1; overflow: hidden; padding-top: 1px; }
.list li {
  height: 16px; display: flex; align-items: center; gap: 6px; padding-left: 43px;
  font: 10px/16px "DejaVu Sans Mono", monospace;
  background: repeating-linear-gradient(to bottom, #888 0 1px, transparent 1px 2px) 31px 0 / 1px 100% no-repeat,
    repeating-linear-gradient(to right, #888 0 1px, transparent 1px 2px) 31px 8px / 11px 1px no-repeat;
}
.g { width: 12px; height: 12px; flex: none; }
.list li span { padding: 0 2px; }
.list .sel { background-size: 1px 8px, 11px 1px; }
.list .sel span { background: #2a6fcf; box-shadow: 2px 0 #cce8ff; }
.list .sel .g { box-shadow: 0 0 0 3px #cce8ff; }

.scroll { width: 17px; flex: none; display: flex; flex-direction: column; background: #f0f0f0; }
.scroll button { height: 18px; flex: none; display: grid; place-items: center; }
.scroll svg { width: 10px; height: 6px; fill: none; stroke: #444; stroke-width: 2; }
.scroll .thumb { background: #cdcdcd; }
.low .before { flex: 145; }
.low .thumb { flex: 380; }
.high .thumb { flex: 384; }
.high .track { flex: 144; }

/* Property sheet */
.props { flex: 1; min-width: 0; position: relative; display: flex; flex-direction: column; background: #fff; border-left: 1px solid #d5d5d5; border-right: 1px solid #d0d0d0; margin-right: 2px; }
.tabs { height: 20px; flex: none; border-bottom: 1px solid #ddd; display: flex; }
.tab { padding: 0 5px; border: 1px solid #d0d0d0; border-width: 0 1px; }
.sheetbox { flex: 1; min-height: 0; display: flex; margin: 4px 2px 1px 3px; border: 1px solid #828790; }
.sheet { flex: 1; align-self: flex-start; border-collapse: collapse; table-layout: fixed; }
.sheet th, .sheet td { height: 19px; padding: 0; border: 1px solid #c0c0c0; text-align: left; font-weight: 400; line-height: 16px; white-space: nowrap; overflow: hidden; border-top: 0; }
.sheet th { background: linear-gradient(#fff, #ececec); text-align: center; border-left: 0; }
.sheet thead th { height: 24px; }
.sheet .no { width: 21px; }
.sheet .name { width: 190px; }
.sheet .hot { background: linear-gradient(#f8d59a, #efb968); }
.sheet td:nth-child(2) { padding-left: 19px; }
.sheet td:nth-child(3) { padding-left: 2px; }
.sheet .cur th { background: #fcd08c; color: #900; }
.sheet .cur td:nth-child(2) { background: #0078d7; color: #fff; }
.sheet .link td:nth-child(2) { color: #0000b8; }
.dim td { color: #808080; }
.sheet .grp td:nth-child(2) { padding-left: 2px; }
.grp button { width: 13px; height: 13px; margin-right: 4px; border: 1px solid #aaa; color: #000; line-height: 11px; vertical-align: middle; }

/* Section editor window */
.dialog {
  position: absolute; left: 222px; right: 18px; top: 20px; bottom: 2px; z-index: 2;
  display: flex; flex-direction: column; padding: 0 6px 7px 7px;
  border: 1px solid #454b52;
  background: linear-gradient(#bdcad8, #d6e4f2 30px, #d6e2f0);
}
.dialog h2 { height: 31px; flex: none; padding-top: 11px; color: #8a9099; }
.dlgbody { flex: 1; min-height: 0; display: flex; flex-direction: column; background: #f0f0f0; }
.dlgtabs { height: 21px; flex: none; display: flex; padding-left: 1px; border-bottom: 1px solid #ddd; }
.dlgtabs .tab { border-top-width: 1px; }
.dlgtabs .tab.on { background: #fff; padding: 0 14px 0 6px; }
.pane { flex: 1; min-height: 0; display: flex; flex-direction: column; margin-right: 2px; padding: 4px 2px 2px 0; border: 4px solid #fff; border-width: 0 2px 1px 4px; }
.strip { height: 27px; flex: none; align-self: flex-start; padding: 0 6px; gap: 6px; }
.strip.second { height: 28px; }
.strip .sep { height: 16px; }
.strip .box { width: 50px; height: 22px; gap: 0; }
.strip .box .caret { margin-left: 0; }
.pressed { height: 24px; padding: 0 3px; border: 1px solid #2878c0; background: #d9eafa; }
.strip .kind { margin: 0 -4px; }
.cad { flex: 1; min-height: 0; width: 100%; background: #14171f; border: 2px solid #e01010; }
.nums { fill: #fff; font: 10px "DejaVu Sans Mono", monospace; text-anchor: middle; }
.nums .lvl { fill: #22ee22; }
.ghost { fill: #41454c; font: 12px "Liberation Mono", monospace; text-anchor: middle; }
.note { fill: #aaa; font: 300 20px "Noto Sans CJK SC", sans-serif; }
.note .green { fill: #19d019; }
.snaps { height: 27px; flex: none; gap: 0; background: none; }
.snaps .free { padding-left: 7px; }
.status { height: 25px; flex: none; display: flex; align-items: stretch; gap: 3px; padding-top: 3px; background: #fff; }
.status span { padding: 3px 4px 0; border: 1px solid #ddd; background: linear-gradient(#fff, #f0f0f0); line-height: 16px; }
.status .xy { width: 97px; }
.status .hint { flex: 1; padding-left: 0; }
.grip { align-self: flex-end; width: 12px; height: 12px; margin-left: -16px; background: radial-gradient(circle, #aaa 1px, transparent 2px) 0 0 / 4px 4px; clip-path: polygon(100% 0, 100% 100%, 0 100%); }
```
